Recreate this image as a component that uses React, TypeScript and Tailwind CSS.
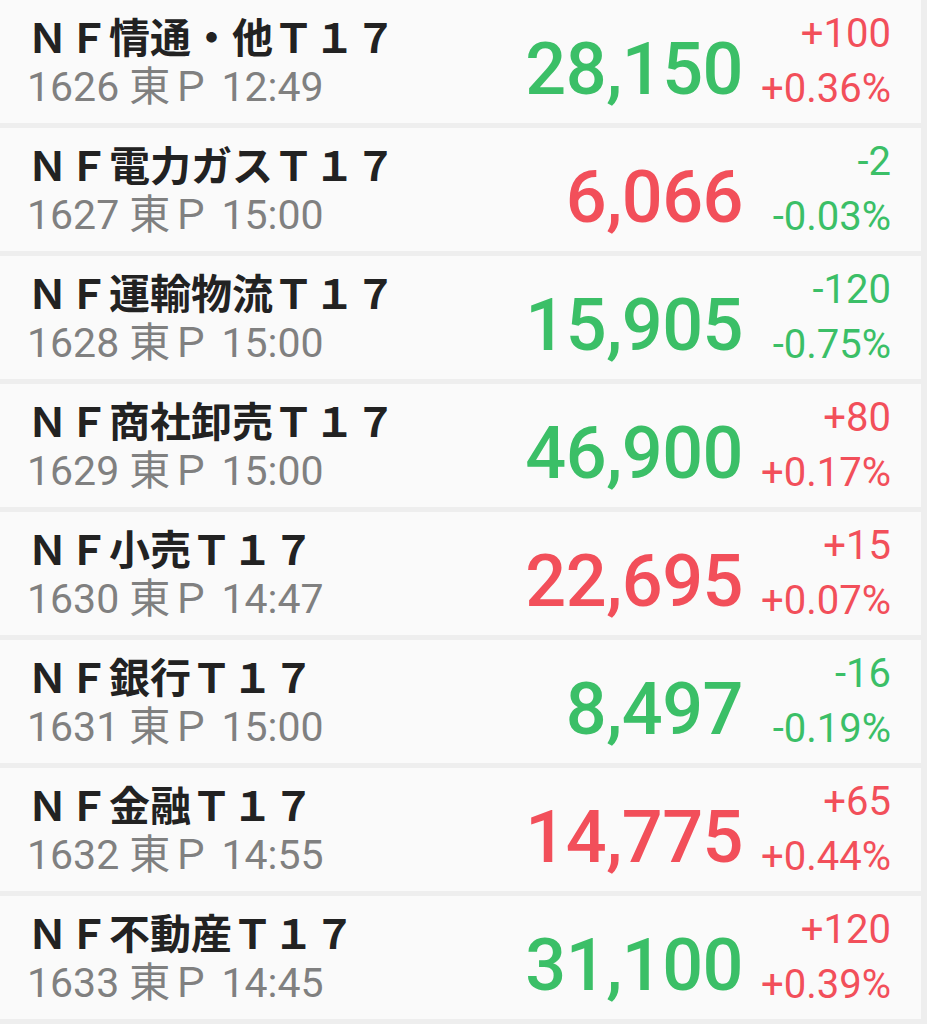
const GREEN = "text-[#3bbf67]";
const RED = "text-[#f24f5a]";

const rows = [
  { name: "ＮＦ情通・他Ｔ１７", code: "1626", time: "12:49", price: "28,150", up: false, change: "+100", pct: "+0.36%" },
  { name: "ＮＦ電力ガスＴ１７", code: "1627", time: "15:00", price: "6,066", up: true, change: "-2", pct: "-0.03%" },
  { name: "ＮＦ運輸物流Ｔ１７", code: "1628", time: "15:00", price: "15,905", up: false, change: "-120", pct: "-0.75%" },
  { name: "ＮＦ商社卸売Ｔ１７", code: "1629", time: "15:00", price: "46,900", up: false, change: "+80", pct: "+0.17%" },
  { name: "ＮＦ小売Ｔ１７", code: "1630", time: "14:47", price: "22,695", up: true, change: "+15", pct: "+0.07%" },
  { name: "ＮＦ銀行Ｔ１７", code: "1631", time: "15:00", price: "8,497", up: false, change: "-16", pct: "-0.19%" },
  { name: "ＮＦ金融Ｔ１７", code: "1632", time: "14:55", price: "14,775", up: true, change: "+65", pct: "+0.44%" },
  { name: "ＮＦ不動産Ｔ１７", code: "1633", time: "14:45", price: "31,100", up: false, change: "+120", pct: "+0.39%" },
];

export default function App() {
  return (
    <div
      className="w-[927px] h-[1024px] overflow-hidden bg-[#eeeeee]"
      style={{ fontFamily: 'Roboto, "Noto Sans CJK JP", sans-serif' }}
    >
      {rows.map((r) => {
        // price colour is its own tick colour, change colour follows sign
        const chg = r.change.startsWith("-") ? GREEN : RED;
        return (
          <div
            key={r.code}
            className="mr-[6px] mb-[5px] h-[123px] bg-[#fafafa] flex items-start pl-[27px] pr-[30px]"
          >
            <div className="flex-1 pt-[15px]">
              <div className="text-[41px] leading-[48px] font-bold text-[#222222] whitespace-nowrap">{r.name}</div>
              <div className="text-[41px] leading-[48px] text-[#808080] whitespace-nowrap">
                {r.code} 東Ｐ {r.time}
              </div>
            </div>
            <div
              className={`mt-[34px] text-[72px] leading-[72px] font-medium tracking-[-0.5px] ${r.up ? RED : GREEN}`}
            >
              {r.price}
            </div>
            <div className={`w-[148px] pt-[6px] text-right text-[40px] leading-[55px] ${chg}`}>
              <div>{r.change}</div>
              <div>{r.pct}</div>
            </div>
          </div>
        );
      })}
    </div>
  );
}
